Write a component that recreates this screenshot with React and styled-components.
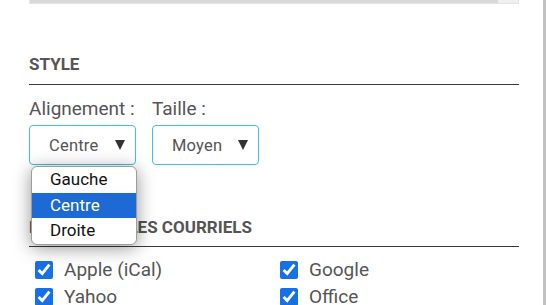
import React, { useState } from "react";
import styled, { createGlobalStyle } from "styled-components";

const GlobalStyle = createGlobalStyle`
  html, body {
    margin: 0;
    padding: 0;
    background: #fff;
    font-family: Roboto, "Liberation Sans", sans-serif;
  }
`;

const Page = styled.div`
  display: flex;
  height: 100vh;
  overflow: hidden;
`;

const Content = styled.div`
  flex: 1;
  padding: 0 24px 0 29px;
`;

const ScrollThumb = styled.div`
  width: 3px;
  background: #c1c1c1;
`;

const EditorBottom = styled.div`
  display: flex;
  height: 3px;
  border: 1px solid #e4e4e4;
  border-top: none;
  background: #f0f0f0;
`;

const EditorThumb = styled.div`
  width: 468px;
  background: #d8d8d8;
`;

const Section = styled.section`
  margin-top: ${(p) => p.$top}px;
`;

const Heading = styled.h3`
  margin: 0;
  padding-bottom: ${(p) => p.$pad}px;
  border-bottom: 1px solid #3a3a3a;
  font-size: 17px;
  line-height: 20px;
  font-weight: 700;
  color: #555;
  text-transform: uppercase;
`;

const FieldRow = styled.div`
  display: flex;
  gap: 16px;
  margin-top: 13px;
`;

const Field = styled.div`
  display: flex;
  flex-direction: column;
  gap: 5px;
`;

const Label = styled.label`
  font-size: 19px;
  line-height: 22px;
  color: #555;
`;

const SelectWrap = styled.div`
  position: relative;
`;

const SelectBox = styled.div`
  box-sizing: border-box;
  display: flex;
  align-items: center;
  justify-content: space-between;
  width: 107px;
  height: 40px;
  padding: 0 10px 0 19px;
  border: 1px solid #3fc0dd;
  border-radius: 4px;
  font-size: 16.5px;
  letter-spacing: 0.2px;
  color: #555;
  cursor: pointer;
`;

const Arrow = styled.span`
  width: 0;
  height: 0;
  border-left: 5px solid transparent;
  border-right: 5px solid transparent;
  border-top: 10px solid #333;
`;

const Menu = styled.ul`
  position: absolute;
  top: 41px;
  left: 2px;
  width: 104px;
  margin: 0;
  padding: 0;
  list-style: none;
  background: #fff;
  border: 1px solid #9c9c9c;
  border-radius: 6px;
  overflow: hidden;
  box-shadow: 0 3px 18px rgba(0, 0, 0, 0.42);
  z-index: 5;
`;

const MenuItem = styled.li`
  height: 25.6px;
  line-height: 25.6px;
  padding-left: 18px;
  font-size: 17px;
  color: ${(p) => (p.$active ? "#fff" : "#111")};
  background: ${(p) => (p.$active ? "#1d6ad4" : "transparent")};
`;

const CheckGrid = styled.div`
  display: grid;
  grid-template-columns: 1fr 1fr;
  row-gap: 8px;
  margin-top: 13px;
`;

const CheckItem = styled.label`
  display: flex;
  align-items: center;
  gap: 11px;
  padding-left: 6px;
  height: 19px;
  font-size: 19px;
  line-height: 19px;
  color: #555;
`;

const Check = styled.input`
  width: 18px;
  height: 18px;
  margin: 0;
  accent-color: #1770e6;
`;

const Select = ({ value, options, open }) => (
  <SelectWrap>
    <SelectBox>
      {value}
      <Arrow />
    </SelectBox>
    {open && (
      <Menu>
        {options.map((o) => (
          <MenuItem key={o} $active={o === value}>
            {o}
          </MenuItem>
        ))}
      </Menu>
    )}
  </SelectWrap>
);

const calendars = ["Apple (iCal)", "Google", "Yahoo", "Office"];

export default function App() {
  const [checked, setChecked] = useState(calendars);

  const toggle = (c) =>
    setChecked((prev) =>
      prev.includes(c) ? prev.filter((x) => x !== c) : [...prev, c]
    );

  return (
    <Page>
      <GlobalStyle />
      <Content>
        <EditorBottom>
          <EditorThumb />
        </EditorBottom>

        <Section $top={50}>
          <Heading $pad={10}>Style</Heading>
          <FieldRow>
            <Field>
              <Label>Alignement :</Label>
              <Select value="Centre" options={["Gauche", "Centre", "Droite"]} open />
            </Field>
            <Field>
              <Label>Taille :</Label>
              <Select value="Moyen" options={["Petit", "Moyen", "Grand"]} />
            </Field>
          </FieldRow>
        </Section>

        <Section $top={52}>
          <Heading $pad={9}>Liens dans les courriels</Heading>
          <CheckGrid>
            {calendars.map((c) => (
              <CheckItem key={c}>
                <Check
                  type="checkbox"
                  checked={checked.includes(c)}
                  onChange={() => toggle(c)}
                />
                {c}
              </CheckItem>
            ))}
          </CheckGrid>
        </Section>
      </Content>
      <ScrollThumb />
    </Page>
  );
}
